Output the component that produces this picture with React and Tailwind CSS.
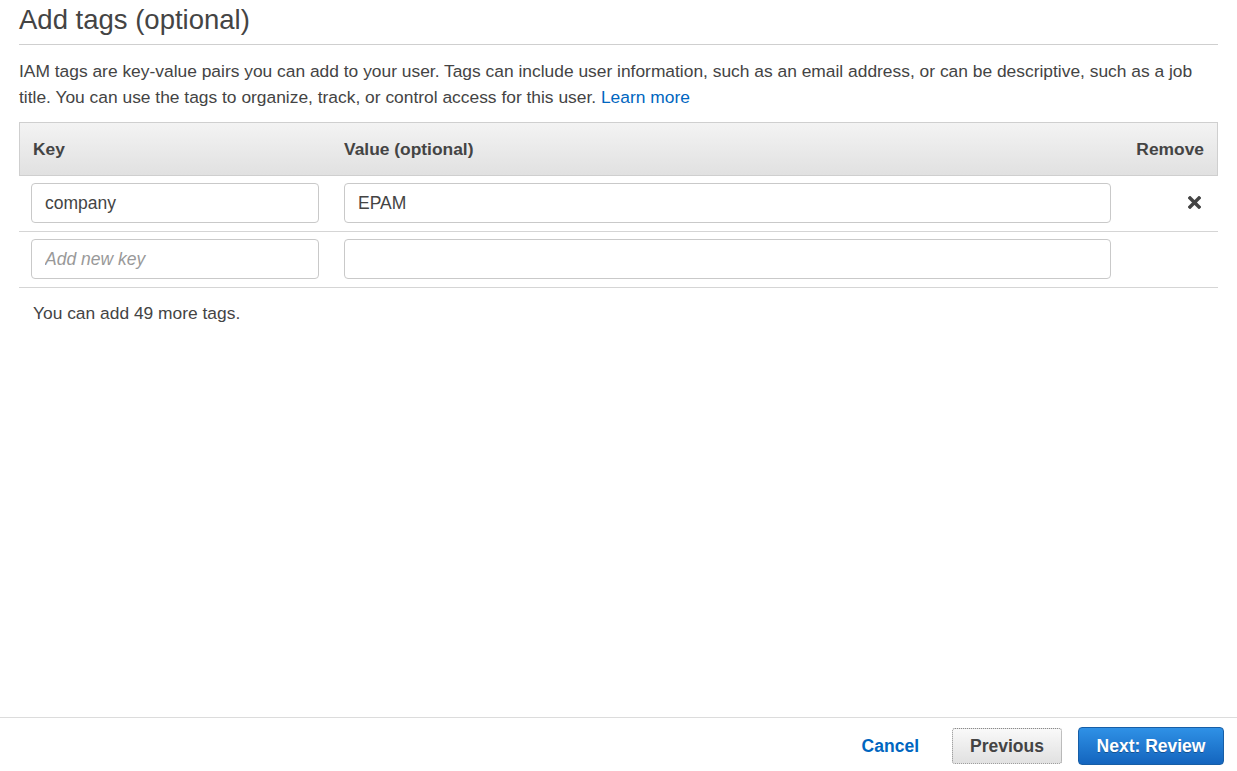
import React from "react";

function TextInput({ value, placeholder, className = "" }) {
  return (
    <input
      type="text"
      defaultValue={value}
      placeholder={placeholder}
      className={`h-[40px] rounded-[4px] border border-[#c9c9c9] bg-white px-[13px] text-[17.5px] text-[#444] outline-none placeholder:italic placeholder:text-[#999] ${className}`}
    />
  );
}

function RemoveIcon() {
  return (
    <svg width="13" height="13" viewBox="0 0 13 13" aria-hidden="true">
      <path d="M2 2 L11 11 M11 2 L2 11" stroke="#444" strokeWidth="3.4" strokeLinecap="square" />
    </svg>
  );
}

export default function App() {
  const rows = [
    { key: "company", value: "EPAM", removable: true },
    { key: "", value: "", removable: false },
  ];

  return (
    <div
      className="flex h-screen flex-col bg-white text-[#444]"
      style={{ fontFamily: '"Liberation Sans", Arial, sans-serif' }}
    >
      <div className="flex-1 px-[19px]">
        {/* Heading */}
        <div className="border-b border-[#cfcfcf] pt-[5px] pb-[9px]">
          <h1 className="text-[27.5px] leading-[30px] font-normal">Add tags (optional)</h1>
        </div>

        <p className="mt-[13px] text-[17.4px] leading-[26px]">
          IAM tags are key-value pairs you can add to your user. Tags can include user information, such as an email
          address, or can be descriptive, such as a job title. You can use the tags to organize, track, or control access
          for this user. <a href="#" className="text-[#0066c0]">Learn more</a>
        </p>

        {/* Tags table */}
        <div className="mt-[12px]">
          <div className="flex h-[54px] items-center border border-[#cfcfcf] bg-gradient-to-b from-[#f3f3f3] to-[#e1e1e1] text-[17.4px] font-bold">
            <div className="w-[311px] pl-[13px]">Key</div>
            <div className="flex-1 pl-[13px]">Value (optional)</div>
            <div className="pr-[13px]">Remove</div>
          </div>

          {rows.map((row, i) => (
            <div key={i} className="flex h-[56px] items-start border-b border-[#d5d5d5] pt-[7px]">
              <div className="w-[312px] pl-[12px]">
                <TextInput value={row.key} placeholder="Add new key" className="w-[288px]" />
              </div>
              <div className="pl-[13px]">
                <TextInput value={row.value} className="w-[767px]" />
              </div>
              <div className="flex flex-1 justify-end pr-[17px] pt-[13px]">
                {row.removable && <RemoveIcon />}
              </div>
            </div>
          ))}

          <div className="mt-[12px] pl-[14px] text-[17.4px] leading-[26px]">You can add 49 more tags.</div>
        </div>
      </div>

      {/* Footer */}
      <div className="flex h-[54px] items-start justify-end border-t border-[#dcdcdc] pt-[9px] pr-[13px]">
        <button className="mt-[6px] mr-[33px] text-[17.5px] font-bold text-[#0066c0]">Cancel</button>
        <button className="mr-[16px] mt-[1px] h-[36px] w-[110px] rounded-[3px] border border-dotted border-[#8a8a8a] bg-gradient-to-b from-[#f9f9f9] to-[#e1e1e1] text-[17.5px] font-bold text-[#444]">
          Previous
        </button>
        <button className="h-[38px] w-[146px] rounded-[4px] border border-[#175ea6] bg-gradient-to-b from-[#2f91e6] to-[#1465be] text-[17.5px] font-bold text-white [text-shadow:0_1px_0_rgba(0,0,0,0.3)]">
          Next: Review
        </button>
      </div>
    </div>
  );
}
